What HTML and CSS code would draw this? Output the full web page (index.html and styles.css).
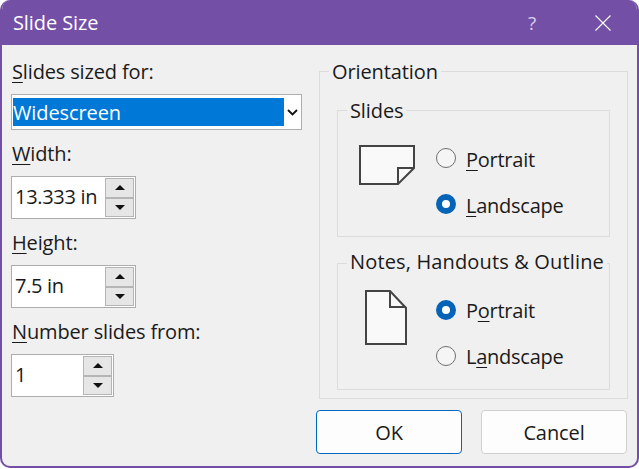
FILE: index.html
```html
<!DOCTYPE html>
<html lang="en">
<head>
    <meta charset="UTF-8">
    <title>Slide Size</title>
    <link rel="stylesheet" href="styles.css">
</head>
<body>
    <div class="dialog">
        <div class="titlebar">
            <span class="title">Slide Size</span>
            <span class="help">?</span>
            <svg class="close" width="16" height="16" viewBox="0 0 16 16"><path d="M0.5 0.5L15.5 15.5M15.5 0.5L0.5 15.5" stroke="#fff" stroke-width="1.1" fill="none"/></svg>
        </div>

        <div class="content">
            <div class="left">
                <div class="label first"><u>S</u>lides sized for:</div>
                <div class="select">
                    <span class="selected">Widescreen</span>
                    <svg class="chevron" width="11" height="7" viewBox="0 0 11 7"><path d="M1 1L5.5 5.5L10 1" stroke="#111" stroke-width="1.8" fill="none"/></svg>
                </div>

                <div class="label"><u>W</u>idth:</div>
                <div class="spin">
                    <span class="value">13.333 in</span>
                    <div class="arrows">
                        <div class="arrow"><span class="up"></span></div>
                        <div class="arrow"><span class="down"></span></div>
                    </div>
                </div>

                <div class="label"><u>H</u>eight:</div>
                <div class="spin">
                    <span class="value">7.5 in</span>
                    <div class="arrows">
                        <div class="arrow"><span class="up"></span></div>
                        <div class="arrow"><span class="down"></span></div>
                    </div>
                </div>

                <div class="label"><u>N</u>umber slides from:</div>
                <div class="spin small">
                    <span class="value">1</span>
                    <div class="arrows">
                        <div class="arrow"><span class="up"></span></div>
                        <div class="arrow"><span class="down"></span></div>
                    </div>
                </div>
            </div>

            <fieldset class="group outer">
                <legend>Orientation</legend>

                <fieldset class="group inner">
                    <legend>Slides</legend>
                    <div class="pane">
                        <svg class="page-icon" width="56" height="41" viewBox="0 0 56 41">
                            <path d="M1 1H55V23L39 39H1Z" fill="#f9f9f9" stroke="#444" stroke-width="2"/>
                            <path d="M39 39V23H55" fill="none" stroke="#444" stroke-width="2"/>
                        </svg>
                        <div class="radios">
                            <div class="radio"><span class="dot"></span><span class="radio-text"><u>P</u>ortrait</span></div>
                            <div class="radio"><span class="dot on"></span><span class="radio-text"><u>L</u>andscape</span></div>
                        </div>
                    </div>
                </fieldset>

                <fieldset class="group inner notes">
                    <legend>Notes, Handouts &amp; Outline</legend>
                    <div class="pane">
                        <svg class="page-icon tall" width="42" height="55" viewBox="0 0 42 55">
                            <path d="M1 1H25L41 18V54H1Z" fill="#f9f9f9" stroke="#444" stroke-width="2"/>
                            <path d="M25 1V17H41" fill="none" stroke="#444" stroke-width="2"/>
                        </svg>
                        <div class="radios">
                            <div class="radio"><span class="dot on"></span><span>P<u>o</u>rtrait</span></div>
                            <div class="radio"><span class="dot"></span><span>L<u>a</u>ndscape</span></div>
                        </div>
                    </div>
                </fieldset>
            </fieldset>
        </div>

        <div class="buttons">
            <div class="btn default">OK</div>
            <div class="btn">Cancel</div>
        </div>
    </div>
</body>
</html>
```

FILE: styles.css
```css
html, body {
    margin: 0;
    background-color: #fff;
}

body {
    width: 639px;
    height: 469px;
    overflow: hidden;
    font-family: "Open Sans", "Noto Sans", sans-serif;
    font-size: 20px;
    letter-spacing: -0.1px;
    color: #1a1a1a;
}

u {
    text-underline-offset: 3px;
    text-decoration-thickness: 1px;
}

.dialog {
    box-sizing: border-box;
    width: 639px;
    height: 468px;
    background-color: #f0f0f0;
    border: 2px solid #734fa6;
    border-top: none;
    border-radius: 10px;
    overflow: hidden;
}

.titlebar {
    display: flex;
    align-items: center;
    height: 45px;
    background-color: #734fa6;
    color: #fff;
    padding: 0 26px 0 11px;
}

.title {
    flex: 1;
}

.help {
    margin-right: 59px;
    font-size: 19px;
    color: #d9cfe8;
}

.content {
    display: flex;
    height: 355px;
}

.left {
    width: 317px;
    padding-left: 9px;
    box-sizing: border-box;
}

.label {
    height: 46px;
    line-height: 48px;
    margin-left: 1px;
    letter-spacing: -0.15px;
}

.label.first {
    height: 49px;
    line-height: 54px;
}

.select {
    display: flex;
    align-items: center;
    box-sizing: border-box;
    width: 291px;
    height: 36px;
    border: 1px solid #adadad;
    background-color: #fff;
    padding: 3px 0 3px 1px;
}

.selected {
    width: 271px;
    height: 100%;
    line-height: 30px;
    background-color: #0078d7;
    color: #fff;
    box-sizing: border-box;
}

.chevron {
    margin-left: 3px;
}

.spin {
    display: flex;
    box-sizing: border-box;
    width: 125px;
    height: 43px;
    border: 1px solid #adadad;
    background-color: #fff;
}

.spin.small {
    width: 103px;
}

.value {
    flex: 1;
    line-height: 39px;
    padding-left: 3px;
    letter-spacing: -0.3px;
}

.arrows {
    display: flex;
    flex-direction: column;
    width: 29px;
    padding: 1px;
    gap: 0;
}

.arrow {
    flex: 1;
    display: flex;
    align-items: center;
    justify-content: center;
    background-color: #e6e6e6;
    border: 1px solid #b5b5b5;
}

.up, .down {
    width: 0;
    height: 0;
    border-left: 5px solid transparent;
    border-right: 5px solid transparent;
}

.up {
    border-bottom: 5px solid #111;
}

.down {
    border-top: 5px solid #111;
}

.group {
    margin: 0;
    padding: 0;
    border: 1px solid #dcdcdc;
    min-width: 0;
    box-sizing: border-box;
}

.group legend {
    padding: 2px 3px 0;
    line-height: 24px;
}

.outer {
    width: 309px;
    height: 341px;
    margin-top: 13px;
}

.outer > legend {
    margin-left: 9px;
}

.inner {
    height: 140px;
    margin: 13px 17px 0;
}

.inner > legend {
    margin-left: 9px;
}

.inner.notes > legend {
    padding: 0 3px 2px;
    letter-spacing: 0.15px;
}

.pane {
    display: flex;
    align-items: flex-start;
    padding-left: 21px;
}

.page-icon {
    margin-top: 22px;
    margin-right: 21px;
    flex: none;
}

.page-icon.tall {
    margin-top: 14px;
    margin-left: 6px;
    margin-right: 29px;
}

.radios {
    display: flex;
    flex-direction: column;
    gap: 18px;
    margin-top: 21px;
    letter-spacing: -0.25px;
}

.notes .radios {
    margin-top: 20px;
}

.radio {
    display: flex;
    align-items: center;
    gap: 10px;
    height: 28px;
}

.radio-text {
    padding-top: 2px;
}

.dot {
    box-sizing: border-box;
    width: 20px;
    height: 20px;
    border: 1px solid #6e6e6e;
    border-radius: 50%;
    background-color: #f5f5f5;
}

.dot.on {
    border: 6px solid #0563b8;
    background-color: #fff;
}

.buttons {
    display: flex;
    justify-content: flex-end;
    gap: 19px;
    padding-right: 10px;
    margin-top: 10px;
}

.btn {
    box-sizing: border-box;
    width: 146px;
    height: 44px;
    line-height: 44px;
    text-align: center;
    background-color: #fdfdfd;
    border: 1px solid #d0d0d0;
    border-radius: 4px;
}

.btn.default {
    border-color: #0067c0;
}
```
